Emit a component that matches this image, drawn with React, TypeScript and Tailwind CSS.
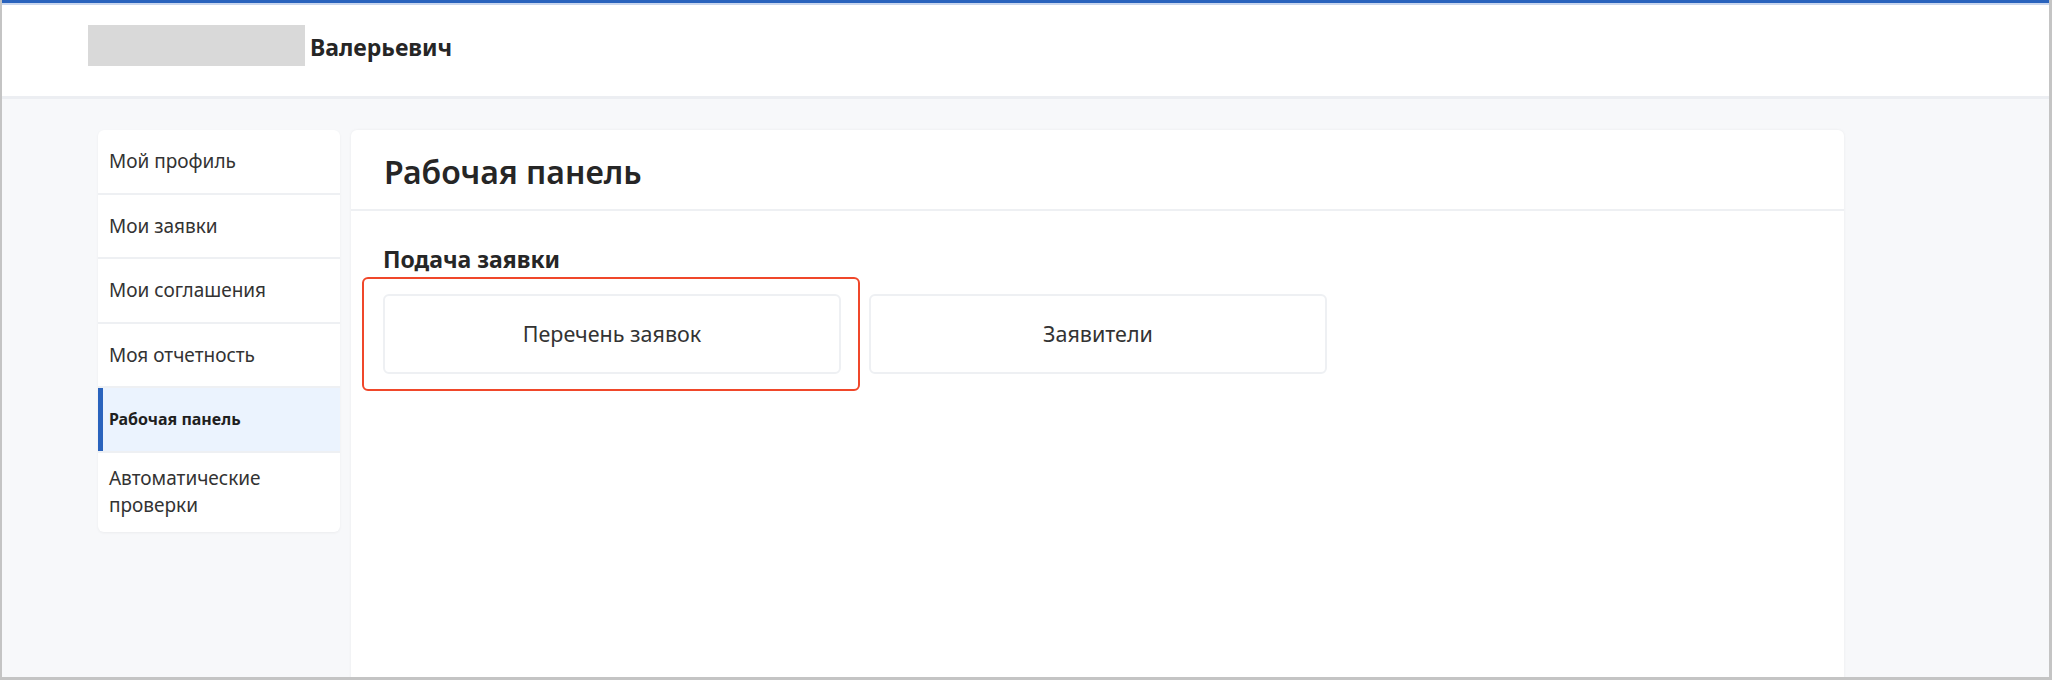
import React from "react";

const items = [
  "Мой профиль",
  "Мои заявки",
  "Мои соглашения",
  "Моя отчетность",
  "Рабочая панель",
  "Автоматические проверки",
];

export default function App() {
  return (
    <div
      className="h-[680px] w-[2052px] overflow-hidden bg-[#f7f8fa] border-l-2 border-r-[3px] border-b-[3px] border-[#c4c4c4] flex flex-col text-[#262626]"
      style={{ fontFamily: '"Noto Sans", "Open Sans", sans-serif' }}
    >
      <div className="h-[3px] bg-[#2a63bd] shrink-0" />
      <div className="h-[2px] bg-[#c9d6ee] shrink-0" />
      <header className="h-[94px] shrink-0 bg-white border-b-[3px] border-[#eceef2] flex items-center pl-[86px] pb-[10px]">
        <div className="w-[217px] h-[41px] bg-[#d9d9d9]" />
        <span className="ml-[5px] text-[23px] font-bold leading-none pt-[4px]">Валерьевич</span>
      </header>
      <main className="flex-1 flex items-start gap-[11px] pl-[96px] pt-[31px]">
        <nav className="w-[242px] shrink-0 rounded-[6px] bg-[#eef0f3] shadow-[0_1px_3px_rgba(0,0,0,0.05)] flex flex-col gap-[2px] overflow-hidden">
          {items.map((t, i) => {
            const active = i === 4;
            const last = i === items.length - 1;
            return (
              <div
                key={t}
                className={
                  (active
                    ? "bg-[#ebf3fe] border-l-[5px] border-[#2a63bd] pl-[6px] font-bold text-[16px] text-[#1f1f1f] "
                    : "bg-white pl-[11px] text-[19px] text-[#333] ") +
                  (last ? "h-[79px] leading-[27px] pr-[30px] " : "h-[62.5px] ") +
                  "flex items-center"
                }
              >
                {t}
              </div>
            );
          })}
        </nav>
        <section className="w-[1493px] h-[560px] bg-white rounded-t-[6px] shadow-[0_0_3px_rgba(0,0,0,0.06)] flex flex-col">
          <div className="h-[81px] border-b-2 border-[#eef0f3] flex items-center pl-[33px] pt-[4px]">
            <h1 className="text-[32px] font-semibold leading-none">Рабочая панель</h1>
          </div>
          <div className="pl-[32px] pt-[33px]">
            <h2 className="text-[23px] font-bold leading-[30px]">Подача заявки</h2>
            <div className="flex gap-[28px] mt-[20px]">
              <div className="relative">
                <div className="absolute -left-[21px] -right-[19px] -top-[17px] -bottom-[17px] border-2 border-[#f0472a] rounded-[6px]" />
                <div className="w-[458px] h-[80px] border-2 border-[#eef0f3] rounded-[6px] bg-white flex items-center justify-center text-[21.5px] text-[#333]">
                  Перечень заявок
                </div>
              </div>
              <div className="w-[458px] h-[80px] border-2 border-[#eef0f3] rounded-[6px] bg-white flex items-center justify-center text-[21.5px] text-[#333]">
                Заявители
              </div>
            </div>
          </div>
        </section>
      </main>
    </div>
  );
}
